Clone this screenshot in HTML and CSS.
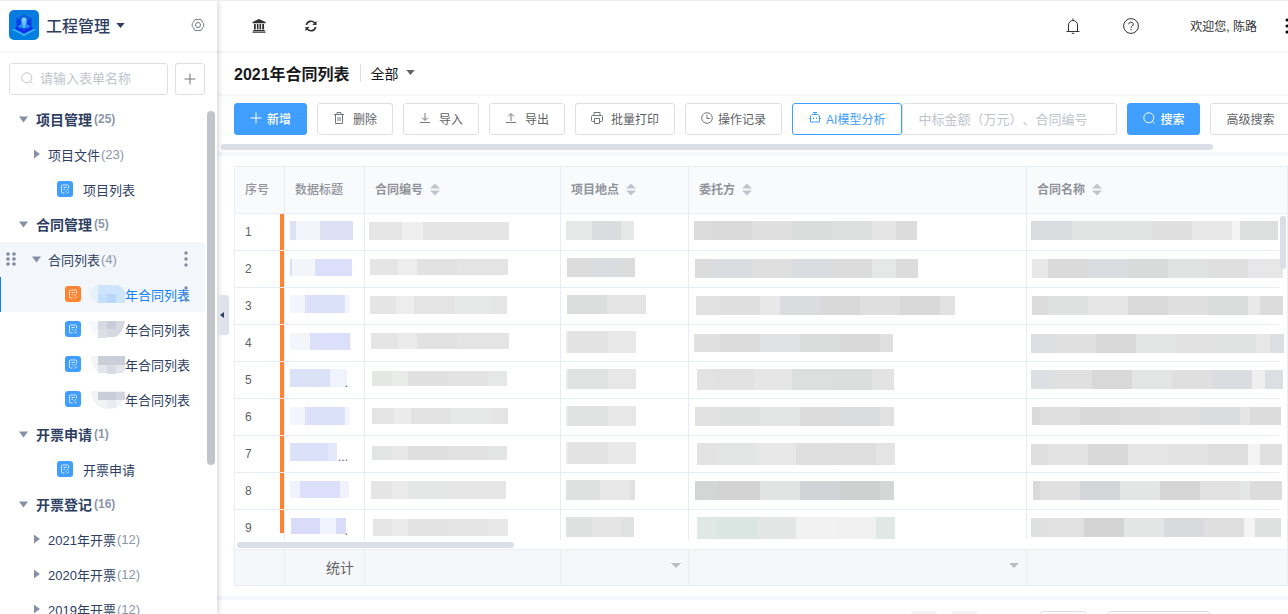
FILE: index.html
```html
<!DOCTYPE html>
<html lang="zh-CN">
<head>
  <meta charset="UTF-8" />
  <title>工程管理</title>
  <link rel="stylesheet" href="styles.css">
</head>
<body>
  <svg class="sprite" aria-hidden="true">
    <symbol id="i-form" viewBox="0 0 16 16">
      <path d="M11.500 7V5a1 1 0 0 0-1-1h-5a1 1 0 0 0-1 1v6a1 1 0 0 0 1 1h2M6.500 6.500h3.200M6.500 8.500h1.500M8.700 10.500l3-3M9.500 12h1.200l1-1.500" fill="none" stroke="#fff" stroke-opacity=".75" stroke-width="1"/>
    </symbol>
    <symbol id="i-dots" viewBox="0 0 4 18">
      <circle cx="2" cy="3" r="1.700"/><circle cx="2" cy="9" r="1.700"/><circle cx="2" cy="15" r="1.700"/>
    </symbol>
    <symbol id="i-search" viewBox="0 0 12 12">
      <circle cx="5.800" cy="5.800" r="5" fill="none" stroke="currentColor"/><path d="M9.300 9.300l2.200 2.200" fill="none" stroke="currentColor"/>
    </symbol>
    <symbol id="i-plus" viewBox="0 0 12 12">
      <path d="M6 .5v11M.5 6h11" fill="none" stroke="currentColor"/>
    </symbol>
  </svg>

  <aside class="sidebar">
    <div class="brand">
      <svg class="logo" viewBox="0 0 30 30">
        <defs>
          <linearGradient id="lg" x1="0" y1="0" x2="0" y2="1"><stop offset="0" stop-color="#0a7be0"/><stop offset="1" stop-color="#0080e0"/></linearGradient>
          <linearGradient id="lt" x1="0" y1="0" x2="0" y2="1"><stop offset="0" stop-color="#8fd8ff"/><stop offset="1" stop-color="#2ea6ff"/></linearGradient>
        </defs>
        <rect width="30" height="30" rx="5" fill="url(#lg)"/>
        <path d="M3 19.500l12-6 12 6-12 6.500z" fill="#3fb4f5"/>
        <path d="M4.500 18.500L15 13l10.500 5.500L15 24z" fill="#0b50e8"/>
        <path d="M15 4.500l7.500 4v8.500L15 21l-7.500-4V8.500z" fill="#0a3fe6"/>
        <path d="M15 4.500l7.500 4L15 12.500 7.500 8.500z" fill="#0b62dd"/>
        <path d="M7 17.500l8 4 8-4v1.500l-8 4-8-4z" fill="#1226f0"/>
        <rect x="12.500" y="7.500" width="5" height="11" rx="2.500" fill="url(#lt)"/>
        <path d="M9 16.500l3-2v3.500zM21 16.500l-3-2v3.500z" fill="#2fa2ff"/>
      </svg>
      <button class="brand-name">工程管理<svg class="caret" viewBox="0 0 10 6"><path d="M0 0h10L5 6z"/></svg></button>
      <button class="gear" aria-label="设置">
        <svg viewBox="0 0 14 14" width="14" height="14"><path d="M5 1.200q2 1 4 0l1.800 1.100q.1 2 2 3.200v3q-1.900 1.200-2 3.200L9 12.800q-2-1-4 0l-1.800-1.100q-.1-2-2-3.200v-3q1.900-1.200 2-3.200z"/><circle cx="7" cy="7" r="2.500"/></svg>
      </button>
    </div>
    <div class="side-search">
      <label class="search-box">
        <svg class="icon"><use href="#i-search"/></svg>
        <input type="text" placeholder="请输入表单名称" aria-label="请输入表单名称">
      </label>
      <button class="add" aria-label="新增表单"><svg class="icon"><use href="#i-plus"/></svg></button>
    </div>
    <nav class="tree">
      <div class="node group"><i class="arrow down"></i>项目管理<span class="count">(25)</span></div>
      <div class="node sub"><i class="arrow"></i>项目文件<span class="count">(23)</span></div>
      <a class="node leaf" href="#"><svg class="form"><use href="#i-form"/></svg>项目列表</a>
      <div class="node group"><i class="arrow down"></i>合同管理<span class="count">(5)</span></div>
      <div class="node sub hover">
        <svg class="drag" viewBox="0 0 10 14"><circle cx="2" cy="2" r="1.800"/><circle cx="8" cy="2" r="1.800"/><circle cx="2" cy="7" r="1.800"/><circle cx="8" cy="7" r="1.800"/><circle cx="2" cy="12" r="1.800"/><circle cx="8" cy="12" r="1.800"/></svg>
        <i class="arrow down"></i>合同列表<span class="count">(4)</span>
        <svg class="more"><use href="#i-dots"/></svg>
      </div>
      <a class="node leaf deep active" href="#">
        <svg class="form"><use href="#i-form"/></svg>
        <svg class="blur" viewBox="0 0 36 20"><rect x="1" y="1" width="34" height="18" rx="9" fill="#e6f1fc"/><path d="M9 1h18a9 9 0 0 1 9 9v9H9z" fill="#cfe4fd"/><path d="M9 10h9v9H9z" fill="#c4dffc"/><path d="M18 10h9v9h-9z" fill="#b8d7fb"/></svg>年合同列表
        <svg class="more"><use href="#i-dots"/></svg>
      </a>
      <a class="node leaf deep" href="#">
        <svg class="form"><use href="#i-form"/></svg>
        <svg class="blur" viewBox="0 0 36 20"><path d="M0 2h36q-2 17-15 17h-6Q2 18 0 2z" fill="#f5f8fa"/><path d="M9 2h27q-2 12-10 16H9z" fill="#d6d9e2"/><path d="M18 2h9v8h-9z" fill="#caccd7"/><path d="M9 10h9v9H9z" fill="#dcdee5"/></svg>年合同列表
      </a>
      <a class="node leaf deep" href="#">
        <svg class="form"><use href="#i-form"/></svg>
        <svg class="blur" viewBox="0 0 36 20"><path d="M2 2h34v17H10Q3 15 2 2z" fill="#f3f4f6"/><path d="M9 2h29v9H9z" fill="#caced8"/><path d="M9 11h27q0 8-4 8H9z" fill="#e3e5eb"/><path d="M18 11h9v9h-9z" fill="#d9dbe4"/></svg>年合同列表
      </a>
      <a class="node leaf deep" href="#">
        <svg class="form"><use href="#i-form"/></svg>
        <svg class="blur" viewBox="0 0 36 20"><path d="M2 2h34q-2 18-16 18Q4 20 2 2z" fill="#f2f3f5"/><path d="M9 3h27v8H9z" fill="#c9cdd8"/><path d="M27 3h9v8h-9z" fill="#d3d5df"/><path d="M18 11h9v8h-9z" fill="#e9ebf0"/></svg>年合同列表
      </a>
      <div class="node group"><i class="arrow down"></i>开票申请<span class="count">(1)</span></div>
      <a class="node leaf" href="#"><svg class="form"><use href="#i-form"/></svg>开票申请</a>
      <div class="node group"><i class="arrow down"></i>开票登记<span class="count">(16)</span></div>
      <div class="node sub"><i class="arrow"></i>2021年开票<span class="count">(12)</span></div>
      <div class="node sub"><i class="arrow"></i>2020年开票<span class="count">(12)</span></div>
      <div class="node sub"><i class="arrow"></i>2019年开票<span class="count">(12)</span></div>
      <span class="tree-bar"></span>
    </nav>
    <button class="collapse" aria-label="收起"><i></i></button>
  </aside>

  <main class="main">
    <header class="topbar">
      <button aria-label="首页"><svg width="14" height="14" viewBox="0 0 14 14" fill="#303133"><path d="M7 0l6.500 3v1.200H.5V3zM2 5h1.800v5.500H2zM4.900 5h1.600v5.500H4.900zM7.500 5h1.600v5.500H7.500zM10.200 5H12v5.500h-1.800zM1.200 11h11.600v1H1.200zM.5 12.500h13v1.300H.5z"/></svg></button>
      <button class="refresh" aria-label="刷新"><svg width="12" height="12" viewBox="0 0 12 12"><path d="M1.300 5A4.800 4.800 0 0 1 9.700 3M10.700 7A4.800 4.800 0 0 1 2.300 9" fill="none" stroke="#303133" stroke-width="1.600"/><path d="M11.500.8v4.100H7.400zM.5 11.200V7.100h4.100z" fill="#303133"/></svg></button>
      <button class="bell" aria-label="通知"><svg width="14" height="16" viewBox="0 0 14 16" fill="none" stroke="#303133"><path d="M.5 13.500h13M2.500 13.500V7a4.500 4.500 0 0 1 9 0v6.500M7 2.500V.5M5.700 15.300h2.600"/></svg></button>
      <button class="help" aria-label="帮助"><svg width="16" height="16" viewBox="0 0 16 16" fill="none" stroke="#303133"><circle cx="8" cy="8" r="7.400"/><path d="M5.800 6.300a2.200 2.200 0 1 1 3.300 1.900Q8 8.800 8 9.800M8 11v1.300"/></svg></button>
      <span class="welcome">欢迎您, 陈路</span>
      <svg class="apps" viewBox="0 0 3 16"><circle cx="2" cy="2" r="1.500"/><circle cx="2" cy="8" r="1.500"/><circle cx="2" cy="14" r="1.500"/></svg>
    </header>

    <div class="titlebar">
      <h1>2021年合同列表</h1>
      <button class="view">全部<svg class="caret" viewBox="0 0 10 6"><path d="M0 0h10L5 6z"/></svg></button>
    </div>

    <div class="toolbar">
      <div class="actions">
        <button class="btn primary"><svg class="icon"><use href="#i-plus"/></svg>新增</button>
        <button class="btn wide"><svg class="icon" viewBox="0 0 12 12"><path d="M1 2.500h10M4 2.500v-2h4v2M2.500 2.500v9h7v-9M5 5v4M7 5v4"/></svg>删除</button>
        <button class="btn wide"><svg class="icon" viewBox="0 0 12 12"><path d="M6 1v7M3 5.500l3 3 3-3M1 10.500h10"/></svg>导入</button>
        <button class="btn wide"><svg class="icon" viewBox="0 0 12 12"><path d="M6 9V2M3 4.500l3-3 3 3M1 10.500h10"/></svg>导出</button>
        <button class="btn wide"><svg class="icon" viewBox="0 0 12 12"><path d="M3 3.500v-3h6v3M3.500 9.500h-2a1 1 0 0 1-1-1v-4a1 1 0 0 1 1-1h9a1 1 0 0 1 1 1v4a1 1 0 0 1-1 1h-2M3.500 6.500h5v5h-5z"/></svg>批量打印</button>
        <button class="btn"><svg class="icon" viewBox="0 0 12 12"><circle cx="6" cy="6" r="5.300"/><path d="M6 2.500V6.500h3"/></svg>操作记录</button>
        <button class="btn ai"><svg class="icon" viewBox="0 0 12 12"><path d="M3 2.500h6l1.500 1.500v6h-9V4zM6 2.500V.5M4 .5h4M1.500 6.500H0M10.500 6.500H12M4.500 5.500V7M7.500 5.500V7"/></svg>AI模型分析</button>
      </div>
      <input class="keyword" type="text" placeholder="中标金额（万元）、合同编号" aria-label="关键字">
      <button class="btn primary"><svg class="icon"><use href="#i-search"/></svg>搜索</button>
      <button class="btn">高级搜索</button>
    </div>
    <div class="toolbar-scroll"><span></span></div>

    <section class="content">
      <div class="grid">
        <table>
          <colgroup><col class="c-no"><col class="c-title"><col class="c-code"><col class="c-place"><col class="c-client"><col></colgroup>
          <thead>
            <tr>
              <th>序号</th>
              <th>数据标题</th>
              <th>合同编号<i class="sort"></i></th>
              <th>项目地点<i class="sort"></i></th>
              <th>委托方<i class="sort"></i></th>
              <th>合同名称<i class="sort"></i></th>
            </tr>
          </thead>
        </table>
        <div class="grid-body">
          <div class="rows">
            <table>
              <colgroup><col class="c-no"><col class="c-title"><col class="c-code"><col class="c-place"><col class="c-client"><col></colgroup>
              <tbody id="rows"></tbody>
            </table>
          </div>
          <span class="bar-y"></span>
          <span class="bar-x"></span>
        </div>
        <table class="summary">
          <colgroup><col class="c-no"><col class="c-title"><col class="c-code"><col class="c-place"><col class="c-client"><col></colgroup>
          <tbody>
            <tr><td></td><td>统计</td><td></td><td><i></i></td><td><i></i></td><td></td></tr>
          </tbody>
        </table>
      </div>
    </section>

    <footer class="pager">
      <button class="page" aria-label="上一页"></button>
      <button class="page" aria-label="下一页"></button>
      <input class="jump" type="text" aria-label="页码">
      <select class="size" aria-label="每页条数"><option></option></select>
    </footer>
  </main>

  <script src="rows.js"></script>
</body>
</html>
```
FILE: styles.css
```css
* {
  box-sizing: border-box;
}

body {
  margin: 0;
  height: 100vh;
  display: flex;
  overflow: hidden;
  border-top: 1px solid #ebebed;
  font-family: "Liberation Sans", "Noto Sans CJK SC", sans-serif;
  font-size: 12px;
  color: #606266;
  background: #fff;
}

button {
  border: 0;
  padding: 0;
  background: none;
  font: inherit;
  color: inherit;
  display: flex;
  align-items: center;
}

input,
select {
  font: inherit;
  border: 1px solid #dcdfe6;
  border-radius: 3px;
  background: #fff;
}

input::placeholder {
  color: #c0c4cc;
  opacity: 1;
}

svg {
  display: block;
  flex: none;
}

.sprite {
  position: absolute;
  width: 0;
  height: 0;
}

.icon {
  width: 12px;
  height: 12px;
  fill: none;
  stroke: currentColor;
}

.caret {
  width: 9px;
  height: 5px;
  fill: currentColor;
}

/* sidebar */
.sidebar {
  position: relative;
  z-index: 2;
  flex: none;
  width: 217px;
  background: #fff;
  box-shadow: 1px 0 6px rgba(0, 0, 0, .2);
}

.brand {
  height: 52px;
  padding: 0 12px 2px 9px;
  display: flex;
  align-items: center;
  border-bottom: 2px solid #f5f5fa;
}

.logo {
  width: 30px;
  height: 30px;
}

.brand-name {
  margin-left: 7px;
  gap: 6px;
  font-size: 16px;
  font-weight: 500;
  color: #2e3f63;
}

.gear {
  margin-left: auto;
}

.gear svg {
  fill: none;
  stroke: #73767c;
}

.side-search {
  display: flex;
  gap: 7px;
  padding: 10px 12px 7px 9px;
}

.search-box {
  flex: 1;
  min-width: 0;
  height: 32px;
  display: flex;
  align-items: center;
  gap: 7px;
  padding: 0 0 2px 11px;
  border: 1px solid #dcdfe6;
  border-radius: 3px;
  color: #c0c4cc;
}

.search-box input {
  width: 100%;
  min-width: 0;
  padding: 0;
  border: 0;
  outline: 0;
  font-size: 13px;
}

.add {
  width: 30px;
  height: 32px;
  justify-content: center;
  border: 1px solid #dcdfe6;
  border-radius: 3px;
  color: #73767c;
}

.tree {
  position: relative;
  margin-right: 12px;
}

.node {
  position: relative;
  height: 35px;
  padding-bottom: 1px;
  display: flex;
  align-items: center;
  font-size: 13px;
  color: #2e3f63;
  text-decoration: none;
  white-space: nowrap;
}

.group {
  padding-left: 19px;
  font-size: 14px;
  font-weight: 700;
}

.sub {
  padding-left: 32px;
}

.leaf {
  padding-left: 57px;
  gap: 10px;
}

.deep {
  padding-left: 65px;
  gap: 0;
}

.hover,
.active {
  background: #f3f7fc;
}

.active {
  color: #1080ff;
  box-shadow: inset 1px 0 #1080ff;
}

.count {
  margin-left: 2px;
  font-size: 12px;
  color: #8c96a9;
}

.sub .count {
  margin-left: 1px;
  font-size: 13px;
}

.arrow {
  width: 9px;
  height: 9px;
  margin-right: 7px;
  background: #8490a7;
  clip-path: polygon(22% 0, 88% 50%, 22% 100%);
}

.group .arrow {
  margin-right: 8px;
}

.arrow.down {
  clip-path: polygon(0 22%, 100% 22%, 50% 88%);
}

.form {
  width: 16px;
  height: 16px;
  border-radius: 3px;
  background: #409eff;
}

.active .form {
  background: #ff8432;
}

.blur {
  width: 36px;
  height: 20px;
  margin-left: 8px;
}

.drag {
  position: absolute;
  left: 6px;
  width: 10px;
  height: 14px;
  fill: #7f8a9f;
}

.more {
  position: absolute;
  right: 17px;
  width: 4px;
  height: 18px;
  fill: #7f8a9f;
}

.tree-bar {
  position: absolute;
  top: 9px;
  right: -10px;
  width: 8px;
  height: 354px;
  border-radius: 4px;
  background: #c1c4c9;
}

.collapse {
  position: absolute;
  top: 294px;
  left: 218px;
  width: 11px;
  height: 40px;
  border-radius: 0 3px 3px 0;
  background: #dfe2ea;
}

.collapse i {
  margin-left: 2px;
  border: 3px solid transparent;
  border-left: 0;
  border-right: 4px solid #2e3f63;
}

/* main */
.main {
  flex: 1;
  min-width: 0;
  display: flex;
  flex-direction: column;
}

.topbar {
  flex: none;
  height: 52px;
  display: flex;
  align-items: center;
  padding-left: 35px;
  border-bottom: 2px solid #f5f5fa;
  color: #303133;
}

.refresh {
  margin-left: 39px;
}

.bell {
  margin-left: auto;
}

.help {
  margin-left: 43px;
}

.welcome {
  margin-left: 51px;
  padding-bottom: 2px;
}

.apps {
  width: 3px;
  height: 16px;
  margin-left: 28px;
}

.titlebar {
  flex: none;
  height: 43px;
  display: flex;
  align-items: center;
  padding: 0 0 2px 17px;
  border-bottom: 2px solid #f5f5fa;
  color: #17191c;
}

.titlebar h1 {
  margin: 0;
  font-size: 16px;
}

.view {
  height: 18px;
  margin-left: 10px;
  padding-left: 10px;
  gap: 7px;
  border-left: 1px solid #dcdfe6;
  font-size: 14px;
}

.view .caret {
  fill: #606266;
}

.toolbar {
  flex: none;
  display: flex;
  gap: 10px;
  padding: 7px 0 9px 17px;
  overflow: hidden;
}

.actions {
  flex: none;
  display: flex;
  gap: 10px;
}

.btn {
  flex: none;
  height: 32px;
  padding: 0 15px 2px;
  gap: 5px;
  border: 1px solid #dcdfe6;
  border-radius: 3px;
  background: #fff;
  white-space: nowrap;
}

.btn .icon {
  color: #73767c;
}

.btn.wide {
  gap: 8px;
}

.btn.primary {
  border-color: #409eff;
  background: #409eff;
  color: #fff;
  font-weight: 500;
}

.btn.ai {
  padding: 0 16px 2px;
  border-color: #409eff;
  color: #409eff;
}

.btn.primary .icon,
.btn.ai .icon {
  color: inherit;
}

.keyword {
  flex: none;
  width: 215px;
  height: 32px;
  margin-left: -10px;
  padding: 0 15px;
  font-size: 13px;
  text-spacing-trim: space-all;
}

.toolbar-scroll {
  flex: none;
  height: 12px;
  padding-left: 4px;
  border-bottom: 4px solid #f5f6fa;
}

.toolbar-scroll span {
  display: block;
  width: 93%;
  height: 6px;
  border-radius: 3px;
  background: #dbdee6;
}

.content {
  padding: 10px 0 10px 17px;
  border-bottom: 4px solid #f6f7fc;
}

/* grid */
.grid {
  border: 1px solid #ebeef5;
  border-bottom: 0;
}

table {
  width: 100%;
  table-layout: fixed;
  border-spacing: 0;
}

.c-no { width: 50px; }
.c-title { width: 80px; }
.c-code { width: 196px; }
.c-place { width: 128px; }
.c-client { width: 338px; }

th,
td {
  padding: 0;
  border-right: 1px solid #e8ecf6;
  border-bottom: 1px solid #e8ecf6;
}

th:last-child,
td:last-child {
  border-right: 0;
}

th {
  height: 47px;
  padding: 0 10px 4px;
  text-align: left;
  font-weight: 700;
  color: #909399;
  background: #f9fafc;
}

th:nth-child(-n+2) {
  font-weight: 500;
}

.sort {
  display: inline-block;
  width: 10px;
  height: 12px;
  margin-left: 7px;
  vertical-align: -2px;
  background: #c0c4cc;
  clip-path: polygon(50% 0, 100% 42%, 0 42%, 0 58%, 100% 58%, 50% 100%, 0 58%, 0 42%);
}

.grid-body {
  position: relative;
  height: calc(100vh - 279px);
  padding: 0 8px 9px 0;
}

.rows {
  height: 100%;
  overflow: hidden;
  margin-right: -8px;
  padding-right: 8px;
}

.rows td {
  height: 37px;
  position: relative;
}

.rows td:first-child {
  padding-left: 10px;
  background: linear-gradient(#ff8432, #ff8432) right top / 4px 100% no-repeat;
}

.rows tr:last-child td:first-child {
  background-size: 4px 23px;
}

.mosaic {
  width: 100%;
  height: 36px;
  overflow: visible;
}

.rest {
  position: absolute;
  right: 16px;
  bottom: 8px;
}

.bar-x,
.bar-y {
  position: absolute;
  border-radius: 3px;
  background: #dbdee6;
}

.bar-x {
  left: 2px;
  bottom: 1px;
  width: 277px;
  height: 6px;
}

.bar-y {
  top: 2px;
  right: 1px;
  width: 6px;
  height: 53px;
}

.summary {
  border-top: 1px solid #ebeef5;
}

.summary td {
  height: 36px;
  padding: 0 10px 2px 0;
  text-align: right;
  font-size: 14px;
  background: #f5f7fa;
}

.summary td:nth-child(4),
.summary td:nth-child(5) {
  padding-right: 7px;
}

.summary i {
  display: inline-block;
  border: 5px solid transparent;
  border-top-color: #b9bcc2;
  border-bottom: 0;
  vertical-align: 4px;
}

/* pager */
.pager {
  flex: none;
  display: flex;
  justify-content: flex-end;
  padding: 11px 78px 0 0;
}

.page {
  width: 26px;
  height: 28px;
  margin-right: 15px;
  border-radius: 2px;
  background: #f4f4f5;
}

.jump {
  width: 46px;
  height: 28px;
  margin: 0 22px 0 47px;
}

.size {
  width: 102px;
  height: 28px;
}
```
FILE: rows.js
```js
// each cell: "top height x0 color x1 color x2 ... end"
const rows = [
  [
    '7 19 5 dce1f6 11 f3f5fb 35 dce1f6 68',
    '8 18 4 e6e6e6 37 efefef 58 e5e5e5 144',
    '7 19 5 e5e8e6 31 dbdcdf 60 e5e8e6 73',
    '7 19 5 dcdcdc 23 dadada 63 dfdfdf 103 dadddb 143 dcdfdd 183 e5e5e5 207 dcdcdc 228',
    '7 19 4 d9dbdd 45 e1e4e2 125 dfdfdf 165 e7e7e7 205 f3f3f3 213 dcdfdd 251'
  ],
  [
    '8 17 5 dbdffa 7 f3f5fb 30 dbdffa 67',
    '8 16 5 e5e5e5 33 ededed 52 e2e2e2 92 e4e4e4 143',
    '7 19 6 dcdcdc 31 dbdcdf 60 dcdcdc 74',
    '8 19 6 dcdcdc 23 d9dbde 63 dfdfdf 103 dadce0 143 dcdcdc 183 e5e8e6 207 dcdcdc 229',
    '8 19 5 e8e8e8 21 dadada 61 d9dbde 101 d8dbd9 141 dfe2e0 181 dfdfdf 221 e7e7ea 233 e7e7e7 256'
  ],
  [
    '7 18 5 f3f5fb 20 dce1fa 60 f3f5fb 65',
    '8 18 5 e5e5e5 31 ededed 49 e4e4e4 89 e5e8e6 129 e6e6e6 142',
    '7 19 6 dbdedc 46 e4e4e4 85',
    '8 19 7 e2e2e2 31 dfdfdf 71 e8e8e8 91 dadce0 131 d9d9d9 171 dfdfdf 211 d9d9d9 251 e2e2e2 266',
    '8 19 5 dcdcdc 21 dee1df 61 e6e6e6 101 dadada 141 dfdfdf 181 d9dcda 221 e9e9e9 233 dcdcdc 256'
  ],
  [
    '8 17 5 f3f5fb 25 dbdffa 65 f3f5fb 66',
    '8 16 6 e5e5e5 33 ebebeb 52 e2e2e2 92 e4e4e4 144',
    '6 22 5 ebebeb 7 e3e3e3 47 e9e9e9 75',
    '9 18 5 e0e0e0 31 dcdcdc 71 e0e1e4 111 dadddb 151 d8d8d8 191 e0e0e0 204',
    '9 19 4 dddfe2 29 e0e0e0 69 d8d8d8 109 e2e5e3 149 e1e1e1 189 dfe2e0 229 e7e7e7 243 dddee1 257'
  ],
  [
    '7 18 5 dbe1f6 45 f0f3fb 62',
    '9 15 7 e5e7e5 27 e9ebe9 43 e0e0e0 83 e3e3e3 123 e5e8e6 142',
    '7 20 5 ebebeb 7 dfe2e0 47 e7e7e7 75',
    '7 21 8 e3e3e3 25 e1e1e1 65 e6e6e6 103 dcdfdd 143 dbdedc 183 e3e3e3 205',
    '8 19 4 dddfe2 25 e0e0e0 65 d8d8d8 105 e2e5e3 145 dfdfdf 185 dadce0 225 efefef 238 dddee1 256'
  ],
  [
    '8 18 5 f3f5fb 20 dce1fa 60 f3f5fb 65',
    '9 16 7 e5e5e5 29 ebebeb 46 e3e3e3 86 e5e8e6 126 e5e5e5 143',
    '7 20 5 ebebeb 7 dfe2e0 47 e7e7e7 75',
    '8 19 6 e1e1e1 31 dee1df 71 e2e5e3 111 dcdcdc 151 d9dbde 191 e1e1e1 205',
    '8 18 5 dadada 13 dfdfdf 53 d9d9d9 93 dcdcdc 133 dedede 173 dadce0 213 e5e5e5 223 dcdcdc 254'
  ],
  [
    '7 18 5 dce1fa 43 e3e9fb 52',
    '10 14 7 e2e5e3 27 e7e7e7 43 dfdfdf 83 e1e1e1 123 e2e5e3 142',
    '6 22 5 ebebeb 7 e3e3e3 47 e9e9e9 75',
    '7 22 8 e3e3e3 29 e2e5e3 68 e8e8e8 107 dfdfdf 146 dedede 187 e4e4e4 206',
    '8 21 4 dfdfdf 21 e3e3e3 61 d8d8d8 101 e6e6e6 141 e3e3e3 181 dedede 221 f3f3f3 233 e0e0e0 255'
  ],
  [
    '8 17 5 f0f3fd 15 dbdffa 55 f0f3fd 64',
    '8 18 6 e5e5e5 27 ebebeb 43 e4e7e5 83 e6e6e6 141',
    '7 20 5 dee1df 39 e7e7e7 69 dfe2e0 74',
    '8 19 6 d4d6d5 29 d3d3d3 71 e1e4e2 111 d1d3d6 151 cfd1d0 191 d5d7d6 205',
    '8 19 6 dadada 13 e0e0e0 53 d3d5d8 93 e3e6e4 133 d5d5d5 173 e1e1e1 213 e4e7e5 223 dcdcdc 255'
  ],
  [
    '8 16 6 d8dcf8 35 f1f4fe 51 d8dcf8 61',
    '9 17 8 e6e6e6 27 ebebeb 43 e3e3e3 83 e5e5e5 123 e8e8e8 143',
    '7 20 5 dee1df 31 e5e5e5 60 dfe2e0 73',
    '7 22 8 dfe8e4 28 dae6e1 68 e4e6e5 107 f2f2f2 146 f1f1f1 187 dfe8e4 206',
    '8 19 4 dee1df 17 e1e1e1 57 d4d4d4 97 e3e6e4 137 d9dadd 177 dfdfdf 217 f4f4f4 228 dee1df 254'
  ]
];

// what is left of the title behind the mosaic
const rest = { 4: '.', 6: '...', 8: '.' };

function mosaic(spec) {
  const p = spec.split(' ');
  let rects = '';
  for (let i = 2; i + 2 < p.length; i += 2) {
    rects += `<rect x="${p[i]}" y="${p[0]}" width="${p[i + 2] - p[i]}" height="${p[1]}" fill="#${p[i + 1]}"/>`;
  }
  return `<svg class="mosaic">${rects}</svg>`;
}

document.getElementById('rows').innerHTML = rows.map((cells, r) => {
  const tds = cells.map((spec, c) => {
    const tail = c === 0 && rest[r] ? `<span class="rest">${rest[r]}</span>` : '';
    return `<td>${mosaic(spec)}${tail}</td>`;
  }).join('');
  return `<tr><td>${r + 1}</td>${tds}</tr>`;
}).join('');
```
